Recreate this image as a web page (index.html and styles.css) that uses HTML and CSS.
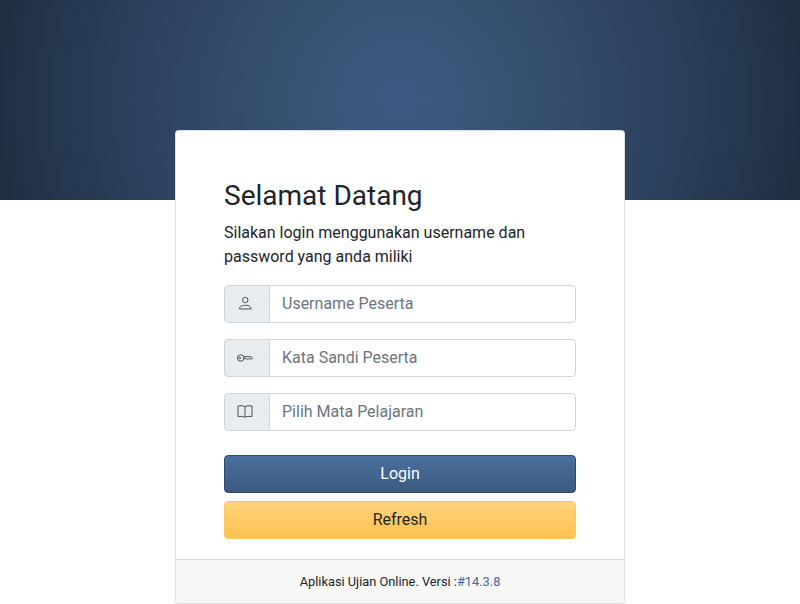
FILE: index.html
```html
<!DOCTYPE html>
<html lang="id">
<head>
<meta charset="utf-8">
<title>Login</title>
<link rel="stylesheet" href="styles.css">
</head>
<body>
<div class="banner"></div>
<main class="card">
  <div class="card-body">
    <h3 class="title">Selamat Datang</h3>
    <p class="lead">Silakan login menggunakan username dan password yang anda miliki</p>
    <div class="field">
      <span class="addon">
        <svg class="icon" viewBox="0 0 16 16" fill="none" stroke="currentColor" stroke-width="1"><circle cx="8.300" cy="4" r="2.700"/><path d="M2.500 13c0-.8.300-1.700 1-2.400.9-.9 2.500-1.300 4.800-1.300s3.900.4 4.800 1.300c.7.700 1 1.600 1 2.400z" stroke-linejoin="round"/></svg>
      </span>
      <span class="control">Username Peserta</span>
    </div>
    <div class="field">
      <span class="addon">
        <svg class="icon" viewBox="0 0 16 16" fill="none" stroke="currentColor" stroke-width="1"><circle cx="3.700" cy="8" r="3.200"/><circle cx="2.800" cy="8" r=".8"/><path d="M6.800 6.700h7.300l1.500 1.300-1.300 1.300-1-.7-1 .7-1-.7-1 .7-1-.7-2.500.2" stroke-linejoin="round"/></svg>
      </span>
      <span class="control">Kata Sandi Peserta</span>
    </div>
    <div class="field">
      <span class="addon">
        <svg class="icon" viewBox="0 0 16 16" fill="none" stroke="currentColor" stroke-width="1"><path d="M8 2.700C6.600 1.700 3.500 1.500 1 2v10.600c2.500-.5 5.600-.3 7 .7 1.400-1 4.500-1.200 7-.7V2C12.500 1.500 9.400 1.700 8 2.700zM8 2.700v10.600" stroke-linejoin="round"/></svg>
      </span>
      <span class="control">Pilih Mata Pelajaran</span>
    </div>
    <div class="actions">
      <button class="btn btn-login" type="button">Login</button>
      <button class="btn btn-refresh" type="button">Refresh</button>
    </div>
  </div>
  <footer class="card-footer">Aplikasi Ujian Online. Versi :<span class="version">#14.3.8</span></footer>
</main>
</body>
</html>
```
FILE: styles.css
```css
* { box-sizing: border-box; }
html, body { margin: 0; padding: 0; }
body {
  background: #fff;
  color: #212529;
  font-family: Roboto, "Liberation Sans", sans-serif;
  font-size: 16px;
  line-height: 1.5;
  height: 604px;
  overflow: hidden;
}
.banner {
  height: 200px;
  background:
    repeating-conic-gradient(rgba(0,0,0,.04) 0 25%, rgba(255,255,255,0) 0 50%) 0 0 / 2px 2px,
    radial-gradient(ellipse 420px 420px at 50% 50%, #3f5c85 0%, #36506f 35%, #2b3f5b 70%, #1f2d42 100%);
}
.card {
  width: 450px;
  height: 474px;
  margin: -70px auto 0;
  position: relative;
  background: #fff;
  border: 1px solid rgba(0,0,0,.125);
  border-radius: 4px;
  display: flex;
  flex-direction: column;
}
.card-body {
  flex: 1;
  padding: 48px 48px 20px;
}
.title {
  margin: 0 0 8px;
  font-size: 28px;
  font-weight: 400;
  line-height: 1.2;
}
.lead { margin: 0 0 16px; }
.field {
  display: flex;
  height: 38px;
  margin-bottom: 16px;
}
.addon {
  width: 46px;
  flex: none;
  display: flex;
  align-items: center;
  padding-left: 12px;
  color: #495057;
  background: #e9ecef;
  border: 1px solid #ced4da;
  border-radius: 4px 0 0 4px;
}
.icon { width: 16px; height: 16px; display: block; }
.control {
  flex: 1;
  margin-left: -1px;
  padding: 6px 12px;
  color: #6c757d;
  background: #fff;
  border: 1px solid #ced4da;
  border-radius: 0 4px 4px 0;
}
.actions {
  display: flex;
  flex-direction: column;
  gap: 8px;
  margin-top: 24px;
}
.btn {
  height: 38px;
  width: 100%;
  font: inherit;
  border-radius: 4px;
  padding: 6px 12px;
}
.btn-login {
  color: #fff;
  border: 1px solid #2f4a6d;
  background: linear-gradient(#4a6f9f, #3d5a80);
}
.btn-refresh {
  color: #212529;
  border: 1px solid #ffc65c;
  background: linear-gradient(#ffd479, #ffc252);
}
.card-footer {
  height: 44px;
  display: flex;
  align-items: center;
  justify-content: center;
  font-size: 12.8px;
  background: #f7f7f7;
  border-top: 1px solid rgba(0,0,0,.125);
  border-radius: 0 0 3px 3px;
}
.version { color: #446a99; }
```
